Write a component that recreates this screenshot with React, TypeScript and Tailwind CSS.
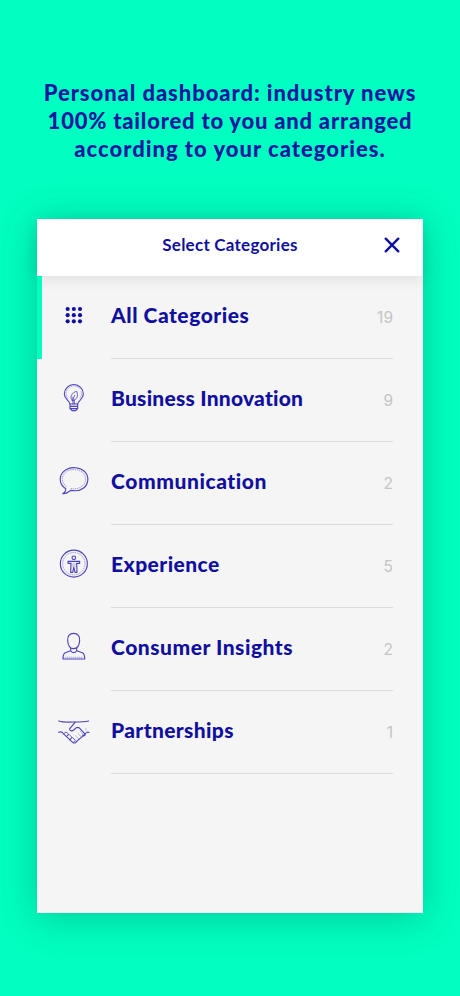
import React from 'react';

const GridIcon = () => (
  <svg viewBox="0 0 150 138" className="w-[50px] h-[46px]" fill="#100fa0">
    {[51, 69.5, 88].map((y) => [53, 71.5, 90].map((x) => <circle key={`${x}-${y}`} cx={x} cy={y} r="6.2" />))}
  </svg>
);

const iconProps = {
  viewBox: '0 0 150 138',
  className: 'w-[50px] h-[46px]',
  fill: 'none',
  stroke: '#4a43bb',
  strokeWidth: 3.4,
  strokeLinecap: 'round' as const,
  strokeLinejoin: 'round' as const,
};

const BulbIcon = () => (
  <svg {...iconProps}>
    <path d="M60 87C59 77 43 73 43 57a28.5 28.5 0 0 1 57 0C100 73 84 77 83 87Z" />
    <path d="M60 87v14l6 6h11l6-6V87M60 94h23M61 101h21" />
    <path d="M69 87V67M73 87V76" strokeWidth="2.5" />
    <path d="M67 77C58 68 64 53 80 49C86 63 81 75 67 77ZM67 76L74 61" strokeWidth="2.5" />
    <path d="M53 70A22.5 22.5 0 0 1 90 42M93 50a22 22 0 0 1-5 22" strokeWidth="2" strokeDasharray="2 4" opacity=".65" />
  </svg>
);

const BubbleIcon = () => (
  <svg {...iconProps}>
    <path d="M47 92C25 78 25 48 48 35C65 25 91 28 104 41C119 56 115 79 101 90C91 98 77 100 62 97C55 103 47 108 38 107C45 103 48 98 47 92Z" />
    <path
      d="M49 85C32 72 34 51 51 40C66 31 88 34 99 45C111 58 108 75 97 84C87 92 75 94 61 91"
      strokeWidth="2.4"
      strokeDasharray="2 4.5"
      opacity=".65"
    />
  </svg>
);

const PersonIcon = () => (
  <svg {...iconProps}>
    <circle cx="71.5" cy="68" r="40.5" />
    <circle cx="71.5" cy="68" r="33.5" strokeWidth="2.4" strokeDasharray="2 5" opacity=".65" />
    <circle cx="71.5" cy="50.5" r="5.5" />
    <path d="M54 61h35v6h-9l1 27h-6l-3.500-16L68 94h-6l1-27h-9Z" />
    <path d="M67 69h9M67 75h9" strokeWidth="2" opacity=".6" />
  </svg>
);

const UserIcon = () => (
  <svg {...iconProps}>
    <path d="M71 28c13 0 19 9 18 22c-1 14-8 24-18 24S54 64 53 50c-1-13 5-22 18-22Z" />
    <path d="M62 73v7c3 8 15 8 18 0v-7M62 80l-16 6c-5 2-7 8-7 19h65c0-11-2-17-7-19l-17-6" />
    <path d="M46 100h51" strokeWidth="2.2" strokeDasharray="2 4" opacity=".6" />
  </svg>
);

const HandshakeIcon = () => (
  <svg {...iconProps}>
    <path d="M26 42C38 46 54 46 74 45C88 45 102 45 116 42" />
    <path d="M75 46C70 53 64 59 59 65C58 71 65 74 71 69L79 62H87L104 80C107 85 103 88 98 85" />
    <path d="M26 76C33 73 37 75 40 80L68 106C73 110 78 108 80 103L104 83C106 78 111 75 117 76" />
    <path d="M41 80l7-5 8 6-7 8M50 88l7-6 9 9-7 7M60 98l7-7 9 9-6 7" strokeWidth="2.6" />
    <path d="M77 87l10 10M85 80l10 11M92 74l9 10" strokeWidth="2.3" strokeDasharray="2 3.500" opacity=".65" />
    <path d="M108 65v4M111 73v2" strokeWidth="2" opacity=".55" />
  </svg>
);

const categories = [
  { name: 'All Categories', count: 19, icon: GridIcon, spacing: 'tracking-[0.53px]' },
  { name: 'Business Innovation', count: 9, icon: BulbIcon, spacing: 'tracking-[0.23px]' },
  { name: 'Communication', count: 2, icon: BubbleIcon, spacing: 'tracking-[0.57px]' },
  { name: 'Experience', count: 5, icon: PersonIcon, spacing: 'tracking-[0.45px]' },
  { name: 'Consumer Insights', count: 2, icon: UserIcon, spacing: 'tracking-[0.52px]' },
  { name: 'Partnerships', count: 1, icon: HandshakeIcon, spacing: 'tracking-[0.37px]' },
];

function App() {
  return (
    <main className="w-[460px] h-[996px] overflow-hidden bg-[#00ffc0] pt-[79px] font-['Lato',sans-serif] text-[#100fa0]">
      <h1 className="flex flex-col items-center text-[22px] leading-[28px] font-black text-[#0818a0] whitespace-nowrap">
        <span className="tracking-[0.93px]">Personal dashboard: industry news</span>
        <span className="tracking-[0.78px]">100% tailored to you and arranged</span>
        <span className="tracking-[1px]">according to your categories.</span>
      </h1>

      <section className="mx-[37px] mt-[56px] h-[694px] bg-[#f5f5f5] shadow-[0_4px_36px_rgba(0,75,65,0.3)]">
        <header className="relative flex h-[57px] items-center justify-center bg-white pb-[5px] shadow-[0_3px_14px_rgba(0,0,0,0.09)]">
          <h2 className="text-[17px] font-bold tracking-[0.25px]">Select Categories</h2>
          <button type="button" aria-label="Close" className="absolute top-[18px] right-[23px]">
            <svg viewBox="0 0 16 16" className="size-4" stroke="#100fa0" strokeWidth="2.4" strokeLinecap="round">
              <path d="M1.700 1.700L14.300 14.300M14.300 1.700L1.700 14.300" />
            </svg>
          </button>
        </header>

        <ul>
          {categories.map(({ name, count, icon: Icon, spacing }, i) => (
            <li key={name} className="relative flex h-[83px] pr-[30px] pl-[13px]">
              {i === 0 && <span className="absolute top-0 left-0 h-[83px] w-[5px] bg-[#00ffc0]" />}
              <div className="pt-4">
                <Icon />
              </div>
              <div className="ml-[11px] flex flex-1 items-center justify-between border-b border-[#dcdcdc] pb-[5px]">
                <span className={`text-[21px] leading-7 font-black ${spacing}`}>{name}</span>
                <span className="pt-[6px] font-['Inter',sans-serif] text-[15.5px] text-[#c4c4c4]">{count}</span>
              </div>
            </li>
          ))}
        </ul>
      </section>
    </main>
  );
}

export default App;
